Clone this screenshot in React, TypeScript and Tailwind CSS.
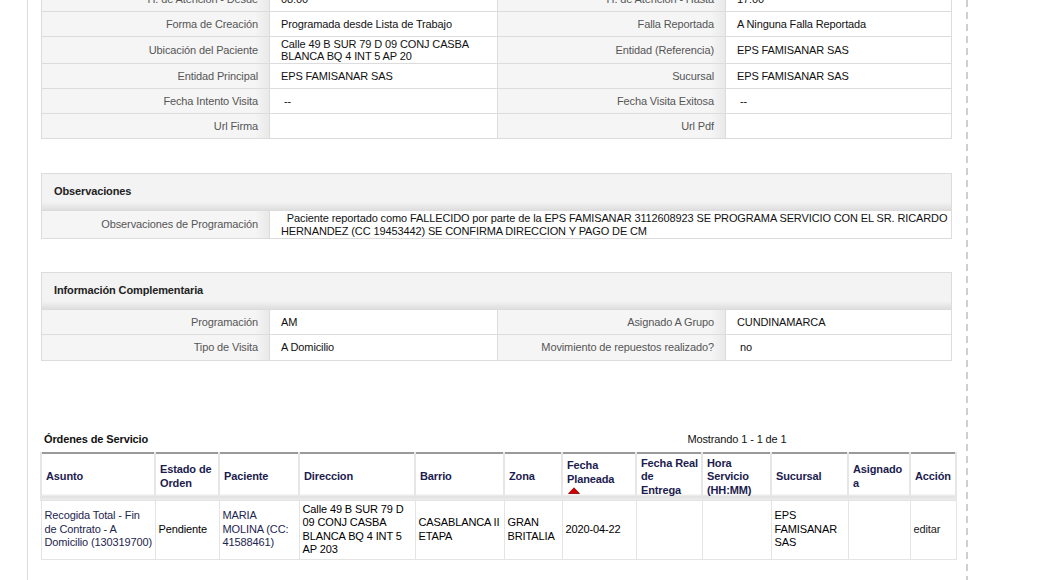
import React from "react";

type Pair = { label: string; value: React.ReactNode };

const labelCell =
  "shrink-0 flex items-center justify-end pr-[11px] text-right text-[#555] whitespace-nowrap bg-[linear-gradient(to_right,#f5f5f5_calc(100%_-_14px),#e9e9e9)] border-r border-[#dcdcdc]";
const valueCell = "shrink-0 flex items-center pl-[11px] text-[#111] border-r border-[#dcdcdc]";

function InfoRow({ left, right, h, last }: { left: Pair; right: Pair; h: string; last?: boolean }) {
  return (
    <div className={`flex ${h} ${last ? "" : "border-b border-[#dcdcdc]"}`}>
      <div className={`w-[228px] ${labelCell}`}>{left.label}</div>
      <div className={`w-[228px] ${valueCell}`}>{left.value}</div>
      <div className={`w-[228px] ${labelCell}`}>{right.label}</div>
      <div className="flex-1 min-w-0 flex items-center pl-[11px] text-[#111]">{right.value}</div>
    </div>
  );
}

function SectionHeader({ title }: { title: string }) {
  return (
    <div className="h-[37px] flex items-center pl-[12px] pb-[2px] font-bold text-[#222] border-b border-[#dcdcdc] bg-[linear-gradient(to_bottom,#f3f3f3_0,#f3f3f3_78%,#e6e6e6_92%,#dedede)]">
      {title}
    </div>
  );
}

const cols = [114, 64, 80, 116, 89, 58, 74, 66, 69, 77, 62, 46];

function SortArrow() {
  return (
    <svg width="12" height="7" viewBox="0 0 12 7" className="block mt-[1px] ml-[1px]">
      <polygon points="0.5,6.5 6,0.8 11.5,6.5" fill="#d40000" stroke="#8a0000" strokeWidth="0.8" />
    </svg>
  );
}

export default function App() {
  const th =
    "px-[4px] align-middle text-left font-bold whitespace-nowrap text-[#1c1c4e] border-x-2 border-[#e6e6e6] bg-[linear-gradient(to_bottom,#ffffff_0,#ffffff_86%,#e2e2e2_92%,#ececec)]";
  const td = "px-[3px] align-middle text-left whitespace-nowrap border border-[#e4e4e4]";

  return (
    <div className="w-[1046px] h-[580px] overflow-hidden bg-white text-[11px] leading-[13px] tracking-[-0.12px] font-['Liberation_Sans',Arial,sans-serif] text-black">
      <div className="flex h-full">
        <div className="w-[27px] shrink-0" />
        <div className="w-px shrink-0 bg-[#dcdcdc]" />
        <div className="w-[928px] shrink-0 pl-[13px]">
          {/* Datos generales */}
          <div className="w-[911px] -mt-[14px] border-x border-t border-[#dcdcdc]">
            <InfoRow
              h="h-[25px]"
              left={{ label: "H. de Atención - Desde", value: "08:00" }}
              right={{ label: "H. de Atención - Hasta", value: "17:00" }}
            />
            <InfoRow
              h="h-[25px]"
              left={{ label: "Forma de Creación", value: "Programada desde Lista de Trabajo" }}
              right={{ label: "Falla Reportada", value: "A Ninguna Falla Reportada" }}
            />
            <InfoRow
              h="h-[27px]"
              left={{
                label: "Ubicación del Paciente",
                value: (
                  <span className="leading-[12.5px] whitespace-nowrap">
                    Calle 49 B SUR 79 D 09 CONJ CASBA
                    <br />
                    BLANCA BQ 4 INT 5 AP 20
                  </span>
                ),
              }}
              right={{ label: "Entidad (Referencia)", value: "EPS FAMISANAR SAS" }}
            />
            <InfoRow
              h="h-[25px]"
              left={{ label: "Entidad Principal", value: "EPS FAMISANAR SAS" }}
              right={{ label: "Sucursal", value: "EPS FAMISANAR SAS" }}
            />
            <InfoRow
              h="h-[25px]"
              left={{ label: "Fecha Intento Visita", value: <span className="pl-[3px]">--</span> }}
              right={{ label: "Fecha Visita Exitosa", value: <span className="pl-[3px]">--</span> }}
            />
            <InfoRow
              h="h-[25px]"
              left={{ label: "Url Firma", value: "" }}
              right={{ label: "Url Pdf", value: "" }}
            />
          </div>

          {/* Observaciones */}
          <div className="w-[911px] mt-[34px] border border-[#dcdcdc]">
            <SectionHeader title="Observaciones" />
            <div className="flex h-[27px]">
              <div className={`w-[228px] ${labelCell}`}>Observaciones de Programación</div>
              <div className="flex-1 min-w-0 overflow-hidden flex items-center pl-[11px] text-[#111] whitespace-nowrap">
                <span className="leading-[13px]">
                  {"\u00a0\u00a0Paciente reportado como FALLECIDO por parte de la EPS FAMISANAR 3112608923 SE PROGRAMA SERVICIO CON EL SR. RICARDO"}
                  <br />
                  HERNANDEZ (CC 19453442) SE CONFIRMA DIRECCION Y PAGO DE CM
                </span>
              </div>
            </div>
          </div>

          {/* Información Complementaria */}
          <div className="w-[911px] mt-[33px] border border-[#dcdcdc]">
            <SectionHeader title="Información Complementaria" />
            <InfoRow
              h="h-[25px]"
              left={{ label: "Programación", value: "AM" }}
              right={{ label: "Asignado A Grupo", value: "CUNDINAMARCA" }}
            />
            <InfoRow
              h="h-[25px]"
              last
              left={{ label: "Tipo de Visita", value: "A Domicilio" }}
              right={{ label: "Movimiento de repuestos realizado?", value: <span className="pl-[3px]">no</span> }}
            />
          </div>

          {/* Órdenes de Servicio */}
          <div className="flex mt-[71px] h-[14px] leading-[14px]">
            <div className="w-[480px] pl-[3px] font-bold text-[#111]">Órdenes de Servicio</div>
            <div className="w-[432px] text-center text-[#111]">Mostrando 1 - 1 de 1</div>
          </div>
          <table className="mt-[6px] -ml-px table-fixed border-collapse w-[915px] border-t-2 border-[#9a9a9a] leading-[13.5px]">
            <colgroup>
              {cols.map((w, i) => (
                <col key={i} style={{ width: w }} />
              ))}
            </colgroup>
            <thead>
              <tr className="h-[47px]">
                <th className={th}>Asunto</th>
                <th className={th}>
                  Estado de
                  <br />
                  Orden
                </th>
                <th className={th}>Paciente</th>
                <th className={th}>Direccion</th>
                <th className={th}>Barrio</th>
                <th className={th}>Zona</th>
                <th className={th}>
                  Fecha
                  <br />
                  Planeada
                  <SortArrow />
                </th>
                <th className={th}>
                  Fecha Real
                  <br />
                  de
                  <br />
                  Entrega
                </th>
                <th className={th}>
                  Hora
                  <br />
                  Servicio
                  <br />
                  (HH:MM)
                </th>
                <th className={th}>Sucursal</th>
                <th className={th}>
                  Asignado
                  <br />a
                </th>
                <th className={th}>Acción</th>
              </tr>
            </thead>
            <tbody>
              <tr className="h-[59px]">
                <td className={`${td} text-[#1e2550]`}>
                  Recogida Total - Fin
                  <br />
                  de Contrato - A
                  <br />
                  Domicilio (130319700)
                </td>
                <td className={td}>Pendiente</td>
                <td className={`${td} text-[#1e2550]`}>
                  MARIA
                  <br />
                  MOLINA (CC:
                  <br />
                  41588461)
                </td>
                <td className={td}>
                  Calle 49 B SUR 79 D
                  <br />
                  09 CONJ CASBA
                  <br />
                  BLANCA BQ 4 INT 5
                  <br />
                  AP 203
                </td>
                <td className={td}>
                  CASABLANCA II
                  <br />
                  ETAPA
                </td>
                <td className={td}>
                  GRAN
                  <br />
                  BRITALIA
                </td>
                <td className={td}>2020-04-22</td>
                <td className={td}></td>
                <td className={td}></td>
                <td className={td}>
                  EPS
                  <br />
                  FAMISANAR
                  <br />
                  SAS
                </td>
                <td className={td}></td>
                <td className={`${td} text-[#222]`}>editar</td>
              </tr>
            </tbody>
          </table>
        </div>
        <div className="w-[10px] shrink-0" />
        <div className="w-[2px] shrink-0 h-full bg-[repeating-linear-gradient(to_bottom,#cfcfcf_0,#cfcfcf_7px,transparent_7px,transparent_12px)]" />
      </div>
    </div>
  );
}
